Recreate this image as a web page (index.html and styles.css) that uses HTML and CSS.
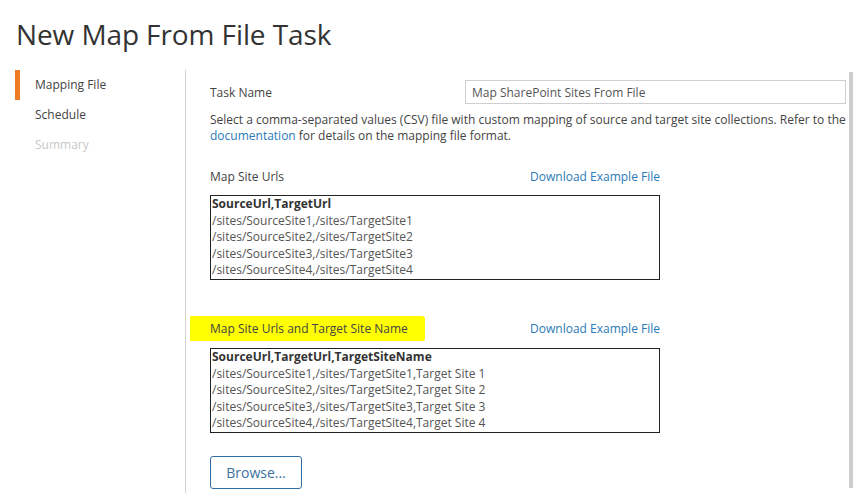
FILE: index.html
```html
<!DOCTYPE html>
<html>
<head>
<meta charset="utf-8">
<link rel="stylesheet" href="styles.css">
</head>
<body>
<h1 class="title">New Map From File Task</h1>
<div class="main">
  <nav class="steps">
    <div class="step active">Mapping File</div>
    <div class="step">Schedule</div>
    <div class="step disabled">Summary</div>
  </nav>
  <section class="content">
    <div class="field-row">
      <label class="field-label">Task Name</label>
      <input class="field-input" type="text" value="Map SharePoint Sites From File">
    </div>
    <p class="desc">Select a comma-separated values (CSV) file with custom mapping of source and target site collections. Refer to the <a class="link" href="#">documentation</a> for details on the mapping file format.</p>

    <div class="sample">
      <div class="sample-head">
        <span class="sample-title">Map Site Urls</span>
        <a class="link" href="#">Download Example File</a>
      </div>
      <div class="sample-box">
        <div class="sample-header">SourceUrl,TargetUrl</div>
        <div>/sites/SourceSite1,/sites/TargetSite1</div>
        <div>/sites/SourceSite2,/sites/TargetSite2</div>
        <div>/sites/SourceSite3,/sites/TargetSite3</div>
        <div>/sites/SourceSite4,/sites/TargetSite4</div>
      </div>
    </div>

    <div class="sample second">
      <div class="sample-head">
        <span class="sample-title highlight">Map Site Urls and Target Site Name</span>
        <a class="link" href="#">Download Example File</a>
      </div>
      <div class="sample-box">
        <div class="sample-header">SourceUrl,TargetUrl,TargetSiteName</div>
        <div>/sites/SourceSite1,/sites/TargetSite1,Target Site 1</div>
        <div>/sites/SourceSite2,/sites/TargetSite2,Target Site 2</div>
        <div>/sites/SourceSite3,/sites/TargetSite3,Target Site 3</div>
        <div>/sites/SourceSite4,/sites/TargetSite4,Target Site 4</div>
      </div>
    </div>

    <button class="browse" type="button">Browse...</button>
    <div class="scroll-thumb"></div>
  </section>
</div>
</body>
</html>
```

FILE: styles.css
```css
html, body {
  margin: 0;
  padding: 0;
  background: #fff;
}
body {
  font-family: "Open Sans", "DejaVu Sans", sans-serif;
  color: #444;
  width: 853px;
  height: 493px;
  overflow: hidden;
}
.title {
  margin: 15px 0 0 16px;
  font-size: 28px;
  line-height: 38px;
  font-weight: 400;
  color: #333;
  letter-spacing: -0.1px;
}
.main {
  display: flex;
  margin-top: 17px;
  height: 440px;
}
.steps {
  width: 185px;
  flex: none;
  border-right: 1px solid #d4d4d4;
}
.step {
  height: 30px;
  line-height: 30px;
  font-size: 12px;
  padding-left: 35px;
  color: #444;
}
.step.active {
  background: linear-gradient(to right, transparent 15px, #ee7a23 15px, #ee7a23 20px, transparent 20px);
}
.step.disabled {
  color: #c8c8c8;
}
.content {
  position: relative;
  flex: 1;
  padding: 10px 7px 0 24px;
  font-size: 12px;
}
.field-row {
  display: flex;
  align-items: center;
}
.field-label {
  width: 255px;
  flex: none;
  color: #444;
}
.field-input {
  width: 381px;
  height: 24px;
  box-sizing: border-box;
  border: 1px solid #cfcfcf;
  padding: 0 6px;
  font-family: inherit;
  font-size: 12px;
  color: #555;
  margin: 0;
  outline: none;
}
.desc {
  margin: 8px -6px 0 0;
  line-height: 16px;
  color: #444;
}
.link {
  color: #2a7ab8;
  text-decoration: none;
}
.sample {
  width: 450px;
  margin-top: 22px;
}
.sample.second {
  margin-top: 39px;
}
.sample-head {
  display: flex;
  justify-content: space-between;
  align-items: center;
  height: 20px;
}
.sample-title {
  color: #444;
}
.highlight {
  background: #ffff00;
  margin-left: -20px;
  padding: 4px 17px 4px 20px;
  border-radius: 1px 3px 2px 1px;
}
.sample-box {
  margin-top: 9px;
  border: 1px solid #222;
  padding: 0 0 0 1px;
  line-height: 16.6px;
  font-size: 12px;
  color: #555;
}
.sample-header {
  font-weight: 700;
  color: #333;
}
.browse {
  display: block;
  margin-top: 23px;
  width: 92px;
  height: 33px;
  border: 1px solid #2f6ea5;
  border-radius: 3px;
  background: #fff;
  color: #3d70a0;
  font-family: inherit;
  font-size: 14px;
  padding: 0;
}
.scroll-thumb {
  position: absolute;
  right: 0;
  top: 2px;
  width: 4px;
  height: 416px;
  background: #cdcdcd;
}
```
